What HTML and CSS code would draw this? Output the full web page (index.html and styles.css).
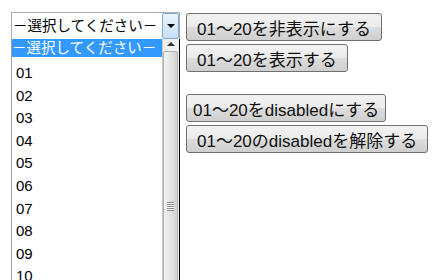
FILE: index.html
```html
<!DOCTYPE html>
<html lang="ja">
  <head>
    <meta charset="UTF-8" />
    <title>select</title>
    <link rel="stylesheet" href="styles.css">
  </head>
  <body>
    <div class="page">
      <div class="combo">
        <div class="combo-field">
          <span class="combo-text">－選択してください－</span>
          <span class="combo-button"><span class="arrow"></span></span>
        </div>
        <div class="combo-list">
          <div class="options">
            <div class="option selected">－選択してください－</div>
            <div class="option-rows">
              <div class="option">01</div>
              <div class="option">02</div>
              <div class="option">03</div>
              <div class="option">04</div>
              <div class="option">05</div>
              <div class="option">06</div>
              <div class="option">07</div>
              <div class="option">08</div>
              <div class="option">09</div>
              <div class="option">10</div>
            </div>
          </div>
          <div class="scrollbar">
            <div class="scroll-up"><span class="up-arrow"></span></div>
            <div class="scroll-thumb"><span class="grip"></span></div>
          </div>
        </div>
      </div>
      <div class="actions">
        <button class="btn">01～20を非表示にする</button>
        <button class="btn">01～20を表示する</button>
        <button class="btn spaced narrow">01～20をdisabledにする</button>
        <button class="btn">01～20のdisabledを解除する</button>
      </div>
    </div>
  </body>
</html>
```

FILE: styles.css
```css
body {
  margin: 0;
  font-family: "Liberation Sans", "Noto Sans CJK JP", sans-serif;
  background-color: #fff;
  color: #000;
}

.page {
  display: flex;
  align-items: flex-start;
  padding: 12px 0 0 11px;
}

.combo {
  width: 169px;
}

.combo-field {
  display: flex;
  height: 27px;
  box-sizing: border-box;
  border: 1px solid #abadb3;
  border-bottom: none;
}

.combo-text {
  flex: 1;
  font-size: 14.5px;
  line-height: 26px;
  padding-left: 1px;
  white-space: nowrap;
  overflow: hidden;
}

.combo-button {
  width: 17px;
  box-sizing: border-box;
  border: 1px solid #86a7cc;
  border-radius: 2px;
  background: linear-gradient(#eaf4fc, #c4e0f7);
  display: flex;
  align-items: center;
  justify-content: center;
}

.arrow {
  width: 0;
  height: 0;
  border-left: 4px solid transparent;
  border-right: 4px solid transparent;
  border-top: 4px solid #000;
}

.combo-list {
  display: flex;
  height: 260px;
  border-left: 1px solid #a0a0a0;
  border-right: 1px solid #000;
}

.options {
  flex: 1;
  font-size: 15px;
}

.option {
  padding-left: 4px;
  line-height: 22.6px;
  white-space: nowrap;
}

.option.selected {
  background-color: #3399ff;
  color: #fff;
  font-size: 14.5px;
  line-height: 18px;
  padding-left: 0;
}

.option-rows {
  padding-top: 5px;
}

.scrollbar {
  width: 16px;
  display: flex;
  flex-direction: column;
  background-color: #f0f0f0;
  border-left: 1px solid #c8c8c8;
}

.scroll-up {
  height: 18px;
  display: flex;
  align-items: center;
  justify-content: center;
}

.up-arrow {
  width: 0;
  height: 0;
  border-left: 4px solid transparent;
  border-right: 4px solid transparent;
  border-bottom: 4px solid #333;
}

.scroll-thumb {
  height: 310px;
  margin: 1px 1px 0 0;
  box-sizing: border-box;
  border: 1px solid #b0b0b0;
  border-radius: 2px;
  background: linear-gradient(90deg, #f4f4f4, #e0e0e0 60%, #cfcfcf);
  display: flex;
  justify-content: center;
  padding-top: 150px;
}

.grip {
  width: 7px;
  height: 9px;
  background: repeating-linear-gradient(#8a8a8a 0 1px, #fff 1px 2px);
}

.actions {
  display: flex;
  flex-direction: column;
  align-items: flex-start;
  gap: 3px;
  margin-left: 6px;
  margin-top: 1px;
}

.btn {
  height: 28px;
  padding: 0 10px;
  font-family: "Liberation Sans", "Noto Sans CJK JP", sans-serif;
  font-size: 17px;
  color: #111;
  border: 1px solid #707070;
  border-radius: 3px;
  background: linear-gradient(#f2f2f2 0%, #ebebeb 50%, #dddddd 51%, #cfcfcf 100%);
}

.btn.spaced {
  margin-top: 19px;
}

.btn.narrow {
  padding: 0 6px;
}
```
